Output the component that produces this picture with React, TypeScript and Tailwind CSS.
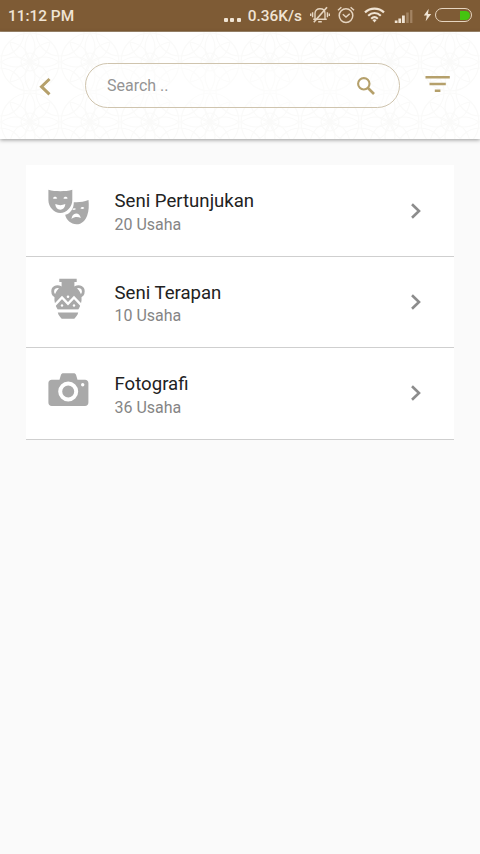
import type { ReactNode } from "react";

function MasksIcon() {
  return (
    <svg width="42" height="38" viewBox="0 0 42 38" className="ml-[1px] block">
      <path fill="#a9a9a9" d="M25.800 13.200c5 .4 9.600-.2 14.700-2.100.5 5.500.5 10.500-1.300 15.300-1.800 5-5.400 8.800-10.700 8.800-5.500 0-10.300-4-11.300-9.400C22.800 24.300 25.800 19.500 25.800 13.200z" />
      <path fill="#a9a9a9" d="M.4.8C4 2 8 2.200 12.300 2.200S20.600 2 24.300.8v10.500c0 6.500-5.800 12.800-12 12.800S.4 17.800.4 11.300z" />
      <path fill="#fff" d="M4.800 9.200c.9-2.100 3.600-2.100 4.500 0-1.500.7-3 .7-4.500 0zm10.500 0c.9-2.100 3.600-2.100 4.500 0-1.500.7-3 .7-4.500 0zM7.300 15.100c3.200 1.400 6.800 1.400 10 0-.2 3.600-2.300 5.600-5 5.600s-4.800-2-5-5.600z" />
      <path fill="#fff" d="M24.200 20.300c1.200-1.500 2.900-1.500 3.900-.2-1.200 1-2.600 1.100-3.900.2zm8.200-1c1.100-1.700 2.900-1.600 4-.3-1.200 1.100-2.700 1.200-4 .3zM23.500 29.900c.3-3.600 2.200-5.400 4.600-5.500 2.500 0 4.200 1.600 4.700 4.700-3-1.700-6.300-1.500-9.300.8z" />
    </svg>
  );
}

function VaseIcon() {
  return (
    <svg width="34" height="42" viewBox="0 0 34 42" className="block">
      <g fill="none" stroke="#a9a9a9" strokeWidth="2.800">
        <path d="M10 9.500C5 7.500 1.700 9.700 1.700 13.200c0 2.800 1.800 4.800 4.200 5" />
        <path d="M24 9.500c5-2 8.300.2 8.300 3.700 0 2.800-1.800 4.800-4.200 5" />
      </g>
      <path fill="#a9a9a9" d="M8.300.8h17.400v3.100h-2.300v4.300c3.900 2.500 6.500 6 7.100 10.500.6 5-1 9.200-3.200 12.800H6.700c-2.200-3.600-3.800-7.800-3.200-12.800.6-4.500 3.200-8 7.100-10.500V3.900H8.300z" />
      <path d="M3 27.800l8-8.300 6 6.300 6-6.300 8 8.300" fill="none" stroke="#fff" strokeWidth="2.400" />
      <g fill="#fff">
        <circle cx="17" cy="18.800" r="1.300" />
        <circle cx="11" cy="27.500" r="1.200" />
        <circle cx="23" cy="27.500" r="1.200" />
      </g>
      <path stroke="#fff" strokeWidth="2.300" d="M4 32.900h26" />
      <path fill="#a9a9a9" d="M6.800 34.400h20.400c-.6 3.300-3 4.900-3.900 6.300H10.700c-.9-1.400-3.300-3-3.900-6.300z" />
    </svg>
  );
}

function CameraIcon() {
  return (
    <svg width="41" height="34" viewBox="0 0 41 34" className="block">
      <path fill="#a9a9a9" d="M11.500 6.700l1.400-4.600C13.300.9 14.100.3 15.300.3h10.400c1.200 0 2 .6 2.400 1.800l1.400 4.600H37c2.100 0 3.400 1.300 3.400 3.400v19.500c0 2.100-1.300 3.400-3.400 3.400H3.800C1.700 33 .4 31.700.4 29.600V10.100c0-2.100 1.300-3.400 3.400-3.400z" />
      <circle cx="20.200" cy="18.500" r="8" fill="none" stroke="#fff" strokeWidth="4" />
      <circle cx="34.700" cy="11.700" r="1.700" fill="#fff" />
    </svg>
  );
}

function StatusIcons() {
  return (
    <div className="flex items-center">
      <svg width="20" height="20" viewBox="0 0 20 20" className="mr-[7px]" fill="none" stroke="#e6d5c0" strokeWidth="1.400">
        <path d="M5 14V8.500C5 5.500 7 3.800 10 3.800s5 1.700 5 4.700V14M3.200 14.300h13.600M8.200 16.700h3.600M2.600 7.200v5M.7 8.400v2.700M17.400 7.200v5M19.300 8.400v2.700" />
        <path d="M17 2.300L3.800 17.200" strokeWidth="1.700" />
      </svg>
      <svg width="18" height="18" viewBox="0 0 18 18" className="mr-[9px]" fill="none" stroke="#e6d5c0" strokeWidth="1.500">
        <circle cx="9" cy="9.600" r="6.800" />
        <path d="M5.800 8.300L9 11l3.700-3.200M1 4.200l3.400-2.900M17 4.200l-3.400-2.900" />
      </svg>
      <svg width="21" height="16" viewBox="0 0 21 16" className="mr-[9px]" fill="none" stroke="#f0e4d4" strokeWidth="2.200">
        <path d="M1 5.400C6.500.4 14.500.4 20 5.400M4.200 8.700c3.800-3.400 8.800-3.400 12.600 0M7.200 11.700c2-1.800 4.600-1.800 6.600 0" />
        <path d="M10.500 15.500L8.400 13c1.200-1 3-1 4.200 0z" fill="#f0e4d4" stroke="none" />
      </svg>
      <svg width="20" height="15" viewBox="0 0 20 15" className="mt-[2px] mr-[9px]">
        <path fill="#f0e4d4" d="M.8 11.500h2.700V14H.8zm3.600-2h2.700V14H4.400zm3.600-3h2.800V14H8z" />
        <path fill="#a28362" d="M12.200 3.500h2.500V14h-2.500zM16.100 1h2.300v13h-2.300z" />
      </svg>
      <svg width="9" height="14" viewBox="0 0 9 14" className="mr-[3px]">
        <path fill="#f0e4d4" d="M5.700.8L.8 7.500h3L2.700 13.200 8.200 6H5z" />
      </svg>
      <div className="flex h-[14px] w-[37px] items-center justify-end rounded-full border-[1.500px] border-[#e6d5c0] pr-[1px]">
        <div className="h-[9px] w-[10px] rounded-r-full rounded-l-[2px] bg-[#45c40f]" />
      </div>
    </div>
  );
}

function HeaderPattern() {
  return (
    <svg width="480" height="107" className="absolute inset-0" aria-hidden="true">
      <defs>
        <pattern id="batik" width="60" height="60" patternUnits="userSpaceOnUse">
          <g fill="none" stroke="#fafaf9" strokeWidth="1.200">
            <circle cx="30" cy="30" r="29" />
            <circle cx="30" cy="30" r="9" />
            <circle cx="0" cy="0" r="24" />
            <circle cx="60" cy="0" r="24" />
            <circle cx="0" cy="60" r="24" />
            <circle cx="60" cy="60" r="24" />
            <path d="M30 1q-10 15 0 29 10-14 0-29zM30 59q-10-15 0-29 10 14 0 29zM1 30q15-10 29 0-14 10-29 0zM59 30q-15-10-29 0 14 10 29 0z" />
            <path d="M10 10q17 3 20 20-17-3-20-20zM50 10q-17 3-20 20 17-3 20-20zM10 50q17-3 20-20-17 3-20 20zM50 50q-17-3-20-20 17 3 20 20z" />
          </g>
        </pattern>
      </defs>
      <rect width="480" height="107" fill="url(#batik)" />
    </svg>
  );
}

function CategoryRow({ icon, title, count }: { icon: ReactNode; title: string; count: string }) {
  return (
    <li className="flex h-[91.400px] items-center border-b border-[#cfcfcf] bg-white pr-[32px] pl-[16px]">
      <div className="flex w-[52px] justify-center pb-[6px]">{icon}</div>
      <div className="ml-[20.500px] flex-1 pt-[4px] whitespace-nowrap">
        <div className="text-[18.600px] leading-[24.500px] text-[#222]">{title}</div>
        <div className="text-[16px] leading-[22px] text-[#858585]">{count}</div>
      </div>
      <svg width="12" height="18" viewBox="0 0 12 18" fill="none" stroke="#8c8c8c" strokeWidth="2.600">
        <path d="M2 2.300L9 9l-7 6.700" />
      </svg>
    </li>
  );
}

export default function App() {
  return (
    <div className="flex h-[854px] w-[480px] flex-col overflow-hidden bg-[#fafafa] font-[Roboto,sans-serif]">
      <div className="flex h-[32px] shrink-0 items-center justify-between border-b border-[#a38c70] bg-[#7e5b35] pr-[8px] pl-[8px] text-[15.400px] font-medium text-[#f0e4d4]">
        <span className="pt-[2px]">11:12 PM</span>
        <div className="flex items-center">
          <div className="mr-[7px] flex gap-[2.500px] pt-[10px]">
            <i className="size-[4px] rounded-[1px] bg-[#f0e4d4]" />
            <i className="size-[4px] rounded-[1px] bg-[#f0e4d4]" />
            <i className="size-[4px] rounded-[1px] bg-[#f0e4d4]" />
          </div>
          <span className="mr-[8px] pt-[2px]">0.36K/s</span>
          <StatusIcons />
        </div>
      </div>
      <header className="relative h-[107px] shrink-0 bg-white shadow-[0_1px_4px_rgba(0,0,0,0.400)]">
        <HeaderPattern />
        <div className="relative flex items-start pt-[31px] pl-[38px]">
          <svg width="14" height="20" viewBox="0 0 14 20" className="mt-[14px]" fill="none" stroke="#b5a06b" strokeWidth="3">
            <path d="M11.500 2L3.500 9.700l8 7.700" />
          </svg>
          <div className="ml-[33px] flex h-[45px] w-[315px] items-center justify-between rounded-full border border-[#cfc4ae] bg-white/40 pr-[23px] pl-[21px]">
            <span className="text-[16px] text-[#949494]">Search ..</span>
            <svg width="20" height="20" viewBox="0 0 20 20" fill="none" stroke="#b5a06b" strokeWidth="2.100">
              <circle cx="7.800" cy="7.800" r="5.700" />
              <path d="M12 12l6 6" strokeWidth="2.600" />
            </svg>
          </div>
          <svg width="26" height="18" viewBox="0 0 26 18" className="mt-[12px] ml-[25px]" fill="#b5a06b">
            <path d="M.5 1h24.300v2.600H.5zM4.500 7.800h16.300v2.500H4.500zM9.800 14.500h5.600V17H9.800z" />
          </svg>
        </div>
      </header>
      <ul className="mx-[26px] mt-[26.400px] w-[427.500px]">
        <CategoryRow icon={<MasksIcon />} title="Seni Pertunjukan" count="20 Usaha" />
        <CategoryRow icon={<VaseIcon />} title="Seni Terapan" count="10 Usaha" />
        <CategoryRow icon={<CameraIcon />} title="Fotografi" count="36 Usaha" />
      </ul>
    </div>
  );
}
